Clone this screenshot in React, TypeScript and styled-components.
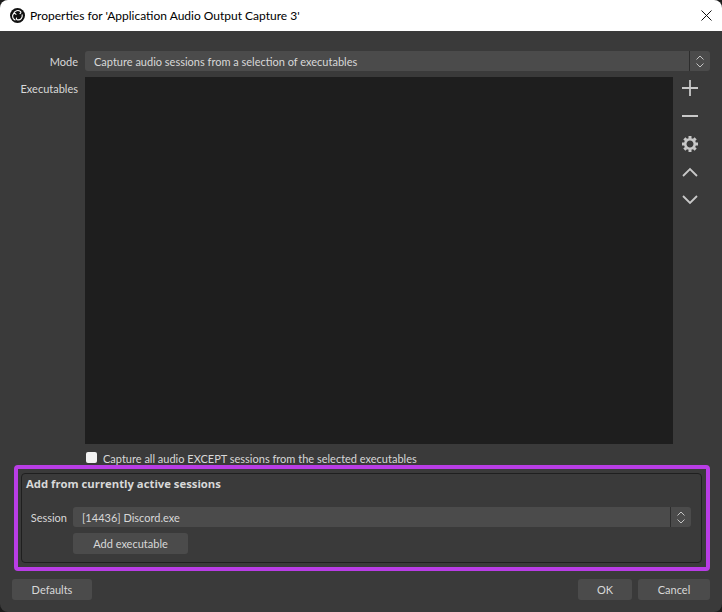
import styled, { createGlobalStyle } from "styled-components";

const GlobalStyle = createGlobalStyle`
  html, body {
    margin: 0;
    padding: 0;
    background: #1c1c1c;
  }
  body {
    font-family: Lato, "Open Sans", sans-serif;
    font-size: 11px;
    color: #d8d8d8;
  }
`;

const Dialog = styled.div`
  width: 722px;
  height: 612px;
  background: #3a3a3a;
  border-radius: 8px;
  overflow: hidden;
  display: flex;
  flex-direction: column;
`;

const TitleBar = styled.div`
  height: 31px;
  flex: none;
  background: #fff;
  color: #000;
  display: flex;
  align-items: center;
  padding: 0 10px 0 10px;
  gap: 5px;
  font-size: 12px;
`;

const TitleText = styled.div`
  flex: 1;
`;

const Body = styled.div`
  flex: 1;
  display: flex;
  flex-direction: column;
  padding: 20px 12px 12px;
`;

const Row = styled.div`
  display: grid;
  grid-template-columns: 66px 1fr;
  column-gap: 7px;
  align-items: center;
`;

const Label = styled.div`
  text-align: right;
  height: 20px;
  box-sizing: border-box;
  padding-top: 1px;
  line-height: 20px;
`;

const Combo = styled.div`
  height: 20px;
  background: #4b4b4b;
  border-radius: 3px;
  display: flex;
  line-height: 20px;
`;

const ComboText = styled.div`
  flex: 1;
  padding: 1px 0 0 9px;
`;

const ComboArrow = styled.div`
  width: 20px;
  height: 20px;
  border-left: 1px solid #2d2d2d;
  display: flex;
  align-items: center;
  justify-content: center;
`;

const ListRow = styled.div`
  display: grid;
  grid-template-columns: 66px 588px 1fr;
  column-gap: 7px;
  margin-top: 6px;
`;

const ExecLabel = styled(Label)`
  margin-top: 1px;
`;

const ListBox = styled.div`
  height: 367px;
  background: #1e1e1e;
`;

const ListTools = styled.div`
  display: flex;
  flex-direction: column;
  width: 20px;
  gap: 8px;
`;

const ToolIcon = styled.div`
  width: 20px;
  height: 20px;
  margin-top: 1px;
  margin-bottom: -1px;
  display: flex;
  align-items: center;
  justify-content: center;
`;

const CheckRow = styled.div`
  display: flex;
  align-items: center;
  gap: 6px;
  margin: 6px 0 0 74px;
  height: 15px;
`;

const CheckBox = styled.div`
  width: 11px;
  height: 11px;
  background: #f2f2f2;
  border-radius: 2px;
`;

const CheckLabel = styled.span`
  padding-top: 2px;
`;

const Highlight = styled.div`
  margin: 0 0 0 2px;
  width: 696px;
  height: 106px;
  box-sizing: border-box;
  border: 4px solid #b93de6;
  border-radius: 4px;
  padding: 4px 4px 4px 3px;
`;

const Group = styled.div`
  height: 90px;
  box-sizing: border-box;
  border: 1px solid #1f1f1f;
  border-radius: 4px;
  padding: 2px 10px 0 4px;
`;

const GroupTitle = styled.div`
  font-family: "Open Sans", sans-serif;
  font-weight: 700;
  font-size: 11.3px;
  line-height: 16px;
  margin-bottom: 15px;
`;

const SessionRow = styled.div`
  display: grid;
  grid-template-columns: 41px 1fr;
  column-gap: 6px;
  row-gap: 6px;
`;

const Button = styled.div<{ $width: number }>`
  width: ${(p) => p.$width}px;
  height: 21px;
  line-height: 21px;
  background: #4b4b4b;
  border-radius: 3px;
  text-align: center;
`;

const Footer = styled.div`
  display: flex;
  justify-content: space-between;
  margin-top: 8px;
`;

const ButtonGroup = styled.div`
  display: flex;
  gap: 6px;
`;

const ObsLogo = () => (
  <svg width="15" height="15" viewBox="0 0 24 24">
    <circle cx="12" cy="12" r="12" fill="#111" />
    <g fill="none" stroke="#fff" strokeWidth="1.800" strokeLinecap="round">
      <path d="M6 8.500c2-4 7-6 10.500-3 1.500 1.300 1 3-.5 3.500" />
      <path d="M19.500 11c.8 4.500-2.500 8.500-7 8-2-.2-2.800-1.800-2-3" />
      <path d="M8 19C4 17 3 12 5.500 9.500c1.500-1.500 3.500-.8 4 .8" />
    </g>
  </svg>
);

const UpDown = () => (
  <svg width="10" height="15" viewBox="0 0 10 15" fill="none" stroke="#c4c4c4" strokeWidth="1">
    <path d="M1.500 5.500 5 2l3.500 3.500M1.500 9.500 5 13l3.500-3.500" />
  </svg>
);

const CloseIcon = () => (
  <svg width="11" height="11" viewBox="0 0 11 11" fill="none" stroke="#111" strokeWidth="1">
    <path d="M.5.500l10 10M10.500.500l-10 10" />
  </svg>
);

const Tool = ({ d }: { d: string }) => (
  <svg width="16" height="16" viewBox="0 0 16 16" fill="none" stroke="#c8c8c8" strokeWidth="1.800">
    <path d={d} />
  </svg>
);

const Gear = () => (
  <svg width="16" height="16" viewBox="-8 -8 16 16">
    <circle r="4.800" fill="none" stroke="#c8c8c8" strokeWidth="2.600" />
    {[0, 45, 90, 135].map((a) => (
      <g key={a} transform={`rotate(${a})`} fill="#c8c8c8">
        <rect x="-1.500" y="-8" width="3" height="2.600" />
        <rect x="-1.500" y="5.400" width="3" height="2.600" />
      </g>
    ))}
  </svg>
);

export default function App() {
  return (
    <>
      <GlobalStyle />
      <Dialog>
        <TitleBar>
          <ObsLogo />
          <TitleText>Properties for 'Application Audio Output Capture 3'</TitleText>
          <CloseIcon />
        </TitleBar>
        <Body>
          <Row>
            <Label>Mode</Label>
            <Combo>
              <ComboText>Capture audio sessions from a selection of executables</ComboText>
              <ComboArrow><UpDown /></ComboArrow>
            </Combo>
          </Row>
          <ListRow>
            <ExecLabel>Executables</ExecLabel>
            <ListBox />
            <ListTools>
              <ToolIcon><Tool d="M0 8h16M8 0v16" /></ToolIcon>
              <ToolIcon><Tool d="M0 8h16" /></ToolIcon>
              <ToolIcon><Gear /></ToolIcon>
              <ToolIcon><Tool d="M1 12 8 5l7 7" /></ToolIcon>
              <ToolIcon><Tool d="M1 4l7 7 7-7" /></ToolIcon>
            </ListTools>
          </ListRow>
          <CheckRow>
            <CheckBox />
            <CheckLabel>Capture all audio EXCEPT sessions from the selected executables</CheckLabel>
          </CheckRow>
          <Highlight>
            <Group>
              <GroupTitle>Add from currently active sessions</GroupTitle>
              <SessionRow>
                <Label>Session</Label>
                <Combo>
                  <ComboText>[14436] Discord.exe</ComboText>
                  <ComboArrow><UpDown /></ComboArrow>
                </Combo>
                <span />
                <Button $width={115}>Add executable</Button>
              </SessionRow>
            </Group>
          </Highlight>
          <Footer>
            <Button $width={80}>Defaults</Button>
            <ButtonGroup>
              <Button $width={54}>OK</Button>
              <Button $width={72}>Cancel</Button>
            </ButtonGroup>
          </Footer>
        </Body>
      </Dialog>
    </>
  );
}
